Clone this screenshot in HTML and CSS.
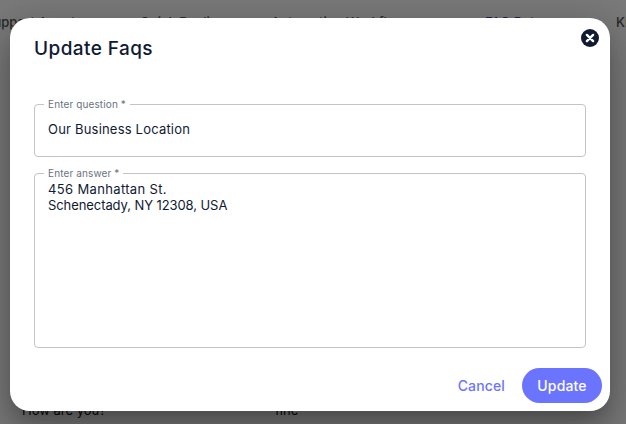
FILE: index.html
```html
<!DOCTYPE html>
<html lang="en">
<head>
<meta charset="utf-8">
<title>Update Faqs</title>
<link rel="stylesheet" href="styles.css">
</head>
<body>
<div class="page">
  <nav class="tabs">
    <span class="tab tab-a">Support Agent</span>
    <span class="tab tab-b">Quick Replies</span>
    <span class="tab tab-c">Automation Workflows</span>
    <span class="tab tab-d">FAQ Bot</span>
    <span class="tab tab-e">Kr</span>
  </nav>
  <div class="row">
    <span class="cell-q">How are you?</span>
    <span class="cell-a">fine</span>
  </div>
</div>
<div class="backdrop">
  <div class="shade"></div>
  <section class="modal">
    <header class="modal-head">
      <h2 class="title">Update Faqs</h2>
      <button class="close" aria-label="Close">
        <svg viewBox="0 0 18 18" width="18" height="18"><circle cx="9" cy="9" r="9" fill="#101a33"/><path d="M5.9 5.9l6.2 6.2M12.1 5.9l-6.2 6.2" stroke="#fff" stroke-width="2.4" stroke-linecap="round"/></svg>
      </button>
    </header>
    <div class="fields">
      <fieldset class="field field-q">
        <legend class="label">Enter question *</legend>
        <div class="value spaced">Our Business Location</div>
      </fieldset>
      <fieldset class="field field-a">
        <legend class="label">Enter answer *</legend>
        <div class="value multi"><span class="line-one">456 Manhattan St.</span><br><span class="line-two">Schenectady, NY 12308, USA</span></div>
      </fieldset>
    </div>
    <footer class="actions">
      <button class="btn-text">Cancel</button>
      <button class="btn-main">Update</button>
    </footer>
  </section>
</div>
</body>
</html>
```
FILE: styles.css
```css
* { box-sizing: border-box; }
html, body { margin: 0; height: 100%; }
body {
  position: relative;
  overflow: hidden;
  background: #fff;
  font-family: "Inter", "Liberation Sans", sans-serif;
  color: #101a33;
}
.page { height: 424px; position: relative; }
.tabs {
  position: absolute;
  top: 14px;
  left: 0;
  right: 0;
  display: flex;
  white-space: nowrap;
  font-size: 13px;
  font-weight: 500;
  line-height: 16px;
  color: #555;
  overflow: hidden;
}
.tab-a { flex: 0 0 155px; margin-left: -15px; }
.tab-b { flex: 0 0 131px; }
.tab-c { flex: 0 0 214px; }
.tab-d { flex: 0 0 131px; color: #3a3fc4; }
.tab-e { flex: 0 0 14px; }
.row {
  position: absolute;
  top: 402px;
  left: 22px;
  display: flex;
  font-size: 13px;
  line-height: 16px;
  color: #111;
}
.cell-q { width: 253px; }
.backdrop { position: absolute; inset: 0; }
.shade { position: absolute; inset: 0; background: rgba(0, 0, 0, 0.52); }
.modal {
  position: absolute;
  left: 10px;
  top: 18px;
  width: 600px;
  height: 393px;
  background: #fff;
  border-radius: 20px;
  box-shadow: 0 11px 15px -7px rgba(0,0,0,.2), 0 24px 38px 3px rgba(0,0,0,.18), 0 9px 46px 8px rgba(0,0,0,.14);
  padding: 0 24px;
  display: flex;
  flex-direction: column;
}
.modal-head { height: 80px; position: relative; padding-top: 16px; }
.title {
  margin: 0;
  font-size: 19px;
  line-height: 30px;
  font-weight: 500;
  letter-spacing: 0.42px;
}
.close {
  position: absolute;
  top: 11px;
  right: -13px;
  padding: 0;
  border: 0;
  background: none;
  width: 18px;
  height: 18px;
  display: block;
}
.close svg { display: block; }
.fields { display: flex; flex-direction: column; gap: 10px; }
.field {
  margin: 0;
  padding: 0 13px;
  border: 1px solid #c4c4c4;
  border-radius: 4px;
  min-width: 0;
}
.field-q { height: 59px; }
.field-a { height: 181px; }
.label {
  padding: 0 4px;
  margin-left: -4px;
  font-size: 10px;
  line-height: 12px;
  letter-spacing: 0.12px;
  color: #6b7280;
}
.value {
  font-size: 13px;
  line-height: 16px;
  color: #101a33;
}
.spaced { letter-spacing: 0.2px; }
.field-q .value { padding-top: 11px; }
.multi { padding-top: 2px; }
.line-one { letter-spacing: 0.35px; }
.line-two { letter-spacing: -0.08px; }
.actions {
  display: flex;
  justify-content: flex-end;
  align-items: center;
  margin-top: 20px;
  margin-right: -16px;
  gap: 17px;
}
.btn-text, .btn-main {
  font: 500 14px/16px "Inter", "Liberation Sans", sans-serif;
  letter-spacing: 0.15px;
  border: 0;
  cursor: pointer;
}
.btn-text { background: none; color: #6b74ff; padding: 0; }
.btn-main {
  width: 80px;
  height: 35px;
  border-radius: 18px;
  background: #6b74ff;
  color: #fff;
}
```
